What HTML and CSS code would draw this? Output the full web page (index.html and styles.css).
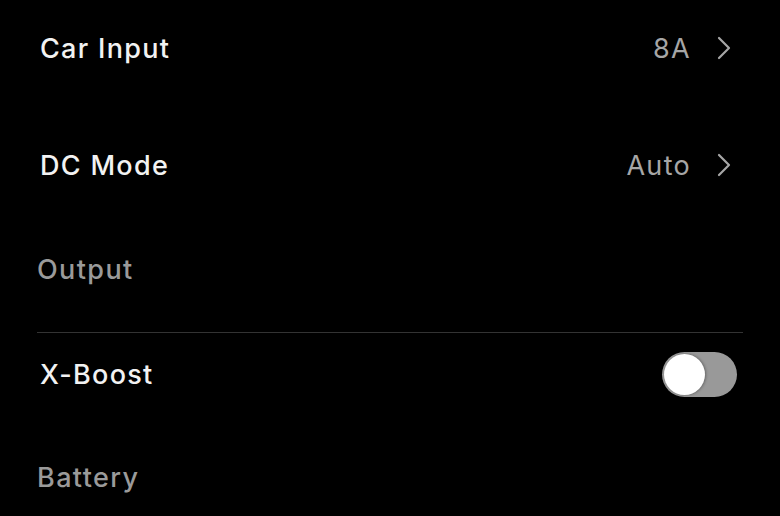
FILE: index.html
```html
<!DOCTYPE html>
<html lang="en">
<head>
    <meta charset="UTF-8">
    <title>Settings</title>
    <link rel="stylesheet" href="styles.css">
</head>
<body>
<div class="list">
    <div class="row">
        <span class="label">Car Input</span>
        <span class="value">8A</span>
        <svg class="chevron" width="14" height="24" viewBox="0 0 14 24"><path d="M2 2 L12 12 L2 22" fill="none" stroke="#a6a6a6" stroke-width="2.2" stroke-linecap="round" stroke-linejoin="round"/></svg>
    </div>
    <div class="row">
        <span class="label">DC Mode</span>
        <span class="value">Auto</span>
        <svg class="chevron" width="14" height="24" viewBox="0 0 14 24"><path d="M2 2 L12 12 L2 22" fill="none" stroke="#a6a6a6" stroke-width="2.2" stroke-linecap="round" stroke-linejoin="round"/></svg>
    </div>

    <div class="section-title divided">Output</div>

    <div class="row row-toggle">
        <span class="label">X-Boost</span>
        <div class="toggle"><div class="knob"></div></div>
    </div>

    <div class="section-title last">Battery</div>
</div>
</body>
</html>
```

FILE: styles.css
```css
body { margin: 0; background: #000; font-family: Inter, "Noto Sans", sans-serif; overflow: hidden; }
.list { padding: 13px 37px 0; }
.row { display: flex; align-items: center; height: 70px; padding-left: 3px; margin-bottom: 47px; }
.label { color: #f2f2f2; font-size: 27px; font-weight: 500; letter-spacing: 1.3px; flex: 1; }
.value { color: #a6a6a6; font-size: 27px; letter-spacing: 1.3px; margin-right: 26px; }
.chevron { margin-right: 12px; }
.section-title { color: #9a9a9a; font-size: 27px; font-weight: 500; letter-spacing: 1.4px; line-height: 40px; }
.section-title.divided { margin-top: 50px; padding-bottom: 42px; border-bottom: 1px solid #333; }
.row-toggle { margin-top: 6px; margin-bottom: 49px; }
.toggle { width: 75px; height: 45px; border-radius: 23px; background: #999; margin-right: 6px; display: flex; align-items: center; padding-left: 2px; box-sizing: border-box; }
.knob { width: 41px; height: 41px; border-radius: 50%; background: #fff; box-shadow: 1px 0 3px rgba(0,0,0,0.35); }
```
